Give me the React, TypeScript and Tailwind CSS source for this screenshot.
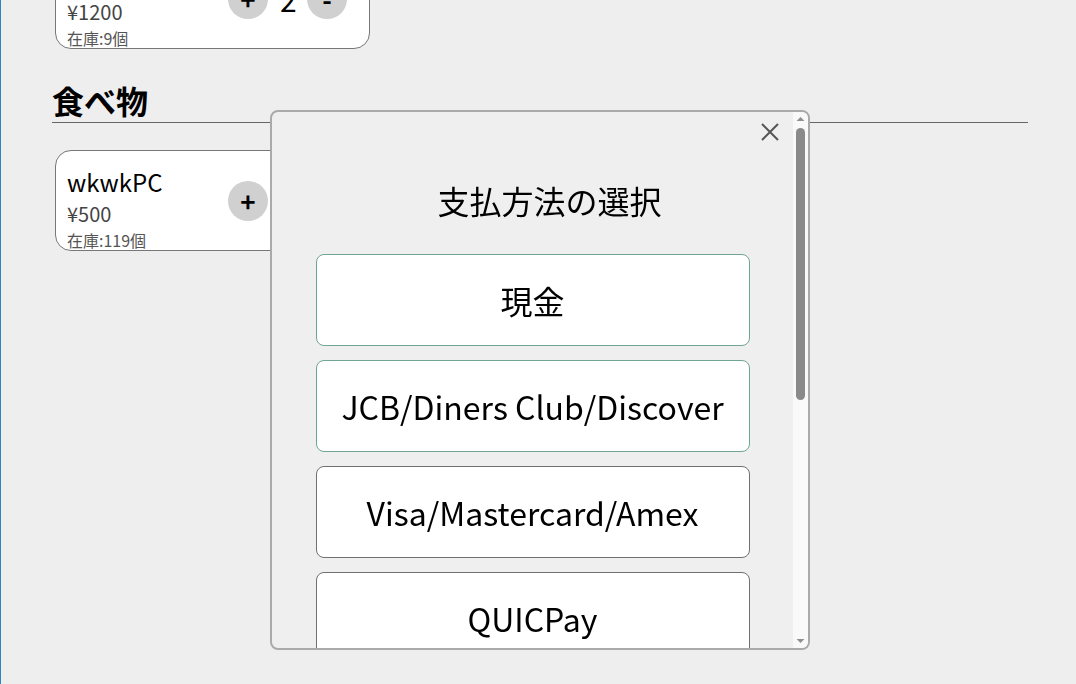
import { useState } from "react";

type Item = { name: string; price: number; stock: number; qty: number };

const methods = [
  "現金",
  "JCB/Diners Club/Discover",
  "Visa/Mastercard/Amex",
  "QUICPay",
  "iD",
  "交通系IC",
  "楽天Edy",
  "PayPay",
];

function ItemCard({ item }: { item: Item }) {
  return (
    <div className="flex items-center w-[315px] h-[101px] bg-white border border-[#777] rounded-[16px] pl-[11px]">
      <div className="w-[161px] self-start pt-[15px]">
        <div className="text-[24px] leading-[32px] text-black">{item.name}</div>
        <div className="text-[20px] leading-[31px] text-[#444]">¥{item.price}</div>
        <div className="text-[16px] leading-[22px] text-[#555]">在庫:{item.stock}個</div>
      </div>
      <div className="flex items-center gap-[12px]">
        <button className="w-[40px] h-[40px] rounded-full bg-[#d0d0d0] text-[26px] leading-none font-bold text-black flex items-center justify-center">
          +
        </button>
        {item.qty > 0 && (
          <>
            <span className="text-[30px] leading-none w-[15px] text-center">{item.qty}</span>
            <button className="w-[40px] h-[40px] rounded-full bg-[#d0d0d0] text-[26px] leading-none font-bold text-black flex items-center justify-center">
              -
            </button>
          </>
        )}
      </div>
    </div>
  );
}

function FakeScrollbar() {
  return (
    <div className="w-[15px] shrink-0 bg-[#f9f9f9] flex flex-col items-center">
      <svg width="15" height="15" viewBox="0 0 15 15">
        <polygon points="3.5,9 11.5,9 7.5,5" fill="#8f8f8f" />
      </svg>
      <div className="mt-[1px] w-[9px] h-[272px] rounded-full bg-[#8a8a8a]" />
      <div className="flex-1" />
      <svg width="15" height="15" viewBox="0 0 15 15">
        <polygon points="3.5,6 11.5,6 7.5,10" fill="#8f8f8f" />
      </svg>
    </div>
  );
}

export default function App() {
  const [open, setOpen] = useState(true);

  return (
    <div
      className="min-h-screen h-[684px] overflow-hidden bg-[#eeeeee] border-l border-[#2a88c0]"
      style={{ fontFamily: '"Noto Sans CJK JP", "Noto Sans", sans-serif' }}
    >
      <div className="pl-[51px] pr-[48px] -mt-[52px]">
        <div className="pl-[3px]">
          <ItemCard item={{ name: "wkwkPC Pro", price: 1200, stock: 9, qty: 2 }} />
        </div>

        <h2 className="mt-[36px] text-[32px] leading-[30px] pb-[7px] font-bold text-black border-b border-[#666]">
          食べ物
        </h2>

        <div className="mt-[27px] pl-[3px] flex gap-4">
          <ItemCard item={{ name: "wkwkPC", price: 500, stock: 119, qty: 0 }} />
        </div>
      </div>

      {open && (
        <div className="fixed left-[270px] top-[110px] w-[540px] h-[540px] bg-[#efefef] border-2 border-[#aaaaaa] rounded-[8px] overflow-hidden flex">
          <div className="flex-1 overflow-hidden">
            <div className="flex justify-end pr-[12px] mt-[9px]">
              <button
                onClick={() => setOpen(false)}
                className="w-[22px] h-[22px] flex items-center justify-center"
              >
                <svg width="20" height="20" viewBox="0 0 20 20" fill="none" stroke="#555" strokeWidth="2">
                  <path d="M2 2 L18 18 M18 2 L2 18" />
                </svg>
              </button>
            </div>
            <h3 className="mt-[33px] ml-[34px] text-center text-[32px] leading-[48px] text-black">
              支払方法の選択
            </h3>
            <div className="mt-[30px] pb-[29px] flex flex-col items-center gap-[14px]">
              {methods.map((m, i) => (
                <button
                  key={m}
                  className={
                    i < 2
                      ? "w-[434px] h-[92px] shrink-0 bg-white border border-[#6ea593] rounded-[8px] text-[32px] text-black"
                      : "w-[434px] h-[92px] shrink-0 bg-white border border-[#707070] rounded-[8px] text-[32px] text-black"
                  }
                >
                  {m}
                </button>
              ))}
            </div>
          </div>
          <FakeScrollbar />
        </div>
      )}
    </div>
  );
}
